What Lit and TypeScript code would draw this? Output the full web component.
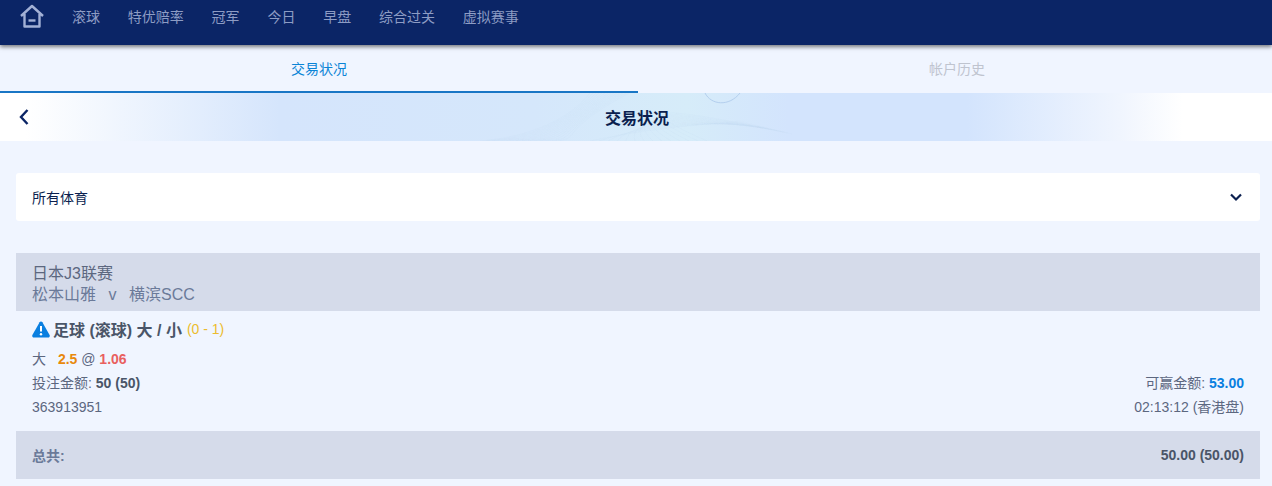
import { LitElement, html, css, svg } from "lit";
import { customElement } from "lit/decorators.js";

const NAV = ["滚球", "特优赔率", "冠军", "今日", "早盘", "综合过关", "虚拟赛事"];

@customElement("app-root")
export class AppRoot extends LitElement {
  static styles = css`
    :host {
      display: block;
      width: 100%;
      height: 486px;
      overflow: hidden;
      background: #f0f5ff;
      font-family: Arial, "Liberation Sans", "Noto Sans CJK SC", sans-serif;
      font-size: 14px;
      color: #4a5568;
    }
    .nav {
      position: relative;
      z-index: 2;
      height: 45px;
      box-sizing: border-box;
      padding: 4px 0 0 20px;
      display: flex;
      align-items: flex-start;
      background: #0b2566;
      box-shadow: 0 2px 4px rgba(0, 0, 0, 0.5);
    }
    .home { width: 24px; height: 24px; display: block; margin-right: 28px; }
    .nav-item {
      color: #8d9cc4;
      font-size: 14px;
      line-height: 26px;
      margin-right: 27.8px;
    }
    .tabs { display: flex; height: 48px; }
    .tab {
      flex: 0 0 638px;
      box-sizing: border-box;
      text-align: center;
      line-height: 48px;
      color: #bfc4cf;
    }
    .tab.on { color: #0a84d6; border-bottom: 2px solid #1976c5; }
    .title {
      position: relative;
      height: 48px;
      box-sizing: border-box;
      padding-left: 2px;
      display: flex;
      align-items: center;
      justify-content: center;
      font-size: 16px;
      font-weight: 700;
      color: #0b1f4f;
      background: linear-gradient(90deg, #fff 0%, #fff 2%, #d5e5fc 22%, #d5e7fb 42%, #d6ecf9 54%, #d3e4fd 62%, #d3e4fd 76%, #f0f5fe 88%, #fff 93%, #fff 100%);
      overflow: hidden;
    }
    .wave { position: absolute; left: 440px; top: 0; width: 360px; height: 48px; }
    .title span { position: relative; }
    .back { position: absolute; left: 18px; top: 15px; width: 12px; height: 18px; }
    .select {
      margin: 32px 12px 0 16px;
      height: 48px;
      padding: 0 16px;
      display: flex;
      align-items: center;
      justify-content: space-between;
      background: #fff;
      border-radius: 3px;
      color: #0b1f4f;
    }
    .chev { width: 14px; height: 10px; display: block; margin-right: 1px; }
    .league {
      margin: 32px 12px 0 16px;
      height: 58px;
      box-sizing: border-box;
      padding: 10px 16px 0;
      background: #d5dbea;
      font-size: 16px;
      line-height: 21px;
      color: #6b7a99;
    }
    .league .name { color: #5c677f; }
    .vs { margin: 0 12.5px; }
    .body { padding: 6px 28px 0 32px; }
    .head {
      display: flex;
      align-items: center;
      height: 24px;
      font-size: 16px;
      font-weight: 700;
      color: #4a5568;
    }
    .warn { width: 18px; height: 17px; display: block; margin-right: 3px; }
    .score { font-size: 14px; font-weight: 400; color: #ecbc2e; margin-left: 5px; }
    .row {
      display: flex;
      justify-content: space-between;
      height: 24px;
      line-height: 24px;
      color: #5c677f;
    }
    .first { margin-top: 6px; }
    .orange { color: #e8890c; font-weight: 700; margin-left: 8px; }
    .red { color: #e9605f; font-weight: 700; }
    b { color: #4a5568; }
    .blue { color: #0a7fe0; }
    .total {
      margin: 12px 12px 0 16px;
      height: 48px;
      padding: 0 16px;
      display: flex;
      align-items: center;
      justify-content: space-between;
      background: #d5dbea;
      font-weight: 700;
      color: #4a5568;
    }
    .total .label { color: #6b7a99; }
  `;

  render() {
    const lines = Array.from({ length: 14 }, (_, i) => i);
    return html`
      <div class="nav">
        <svg class="home" viewBox="0 0 24 24" fill="none" stroke="#a3b1d6" stroke-width="2.4">
          <path d="M1 12 12 2l11 10M4.5 10V22.5h15V10" stroke-linejoin="round" />
          <path d="M8.5 16.5h7" />
        </svg>
        ${NAV.map((n) => html`<div class="nav-item">${n}</div>`)}
      </div>
      <div class="tabs">
        <div class="tab on">交易状况</div>
        <div class="tab">帐户历史</div>
      </div>
      <div class="title">
        <svg class="wave" viewBox="0 0 360 48" fill="none" stroke="#bcd6ee" stroke-width="0.5">
          ${lines.map(
            (i) => svg`<path opacity="0.25" d="M${40 + i * 6} 48C${90 + i * 4} 44 ${130 - i} ${26 + i} ${150 + i * 3} 0M${150 + i * 9} 48C${190} ${40 - i * 2} ${210} ${36 - i * 2} ${300 + i * 4} ${28 + i}" />`
          )}
          <path d="M265 0c6 12 24 14 35 0" stroke="#b4cfee" stroke-width="1" />
        </svg>
        <svg class="back" viewBox="0 0 12 18" fill="none" stroke="#0b2566" stroke-width="2.4">
          <path d="M9.5 2 3 9l6.5 7" />
        </svg>
        <span>交易状况</span>
      </div>
      <div class="select">
        <span>所有体育</span>
        <svg class="chev" viewBox="0 0 14 10" fill="none" stroke="#0b1f4f" stroke-width="2.2">
          <path d="M2 2.5 7 7.5 12 2.5" />
        </svg>
      </div>
      <div class="league">
        <div class="name">日本J3联赛</div>
        <div>松本山雅<span class="vs">v</span>横滨SCC</div>
      </div>
      <div class="body">
        <div class="head">
          <svg class="warn" viewBox="0 0 18 17">
            <path d="M9 .5c.6 0 1.1.3 1.4.8l7.2 12.6c.6 1.1-.2 2.6-1.4 2.6H1.8C.6 16.5-.2 15 .4 13.9L7.6 1.3C7.9.8 8.4.5 9 .5Z" fill="#0a7fe0" />
            <path d="M9 5v5.5" stroke="#fff" stroke-width="2" />
            <circle cx="9" cy="13.2" r="1.2" fill="#fff" />
          </svg>
          足球 (滚球) 大 / 小 <span class="score">(0 - 1)</span>
        </div>
        <div class="row first">
          <span>大 <span class="orange">2.5</span> @ <span class="red">1.06</span></span>
        </div>
        <div class="row">
          <span>投注金额: <b>50 (50)</b></span>
          <span>可赢金额: <b class="blue">53.00</b></span>
        </div>
        <div class="row">
          <span>363913951</span>
          <span>02:13:12 (香港盘)</span>
        </div>
      </div>
      <div class="total">
        <span class="label">总共:</span>
        <span>50.00 (50.00)</span>
      </div>
    `;
  }
}
